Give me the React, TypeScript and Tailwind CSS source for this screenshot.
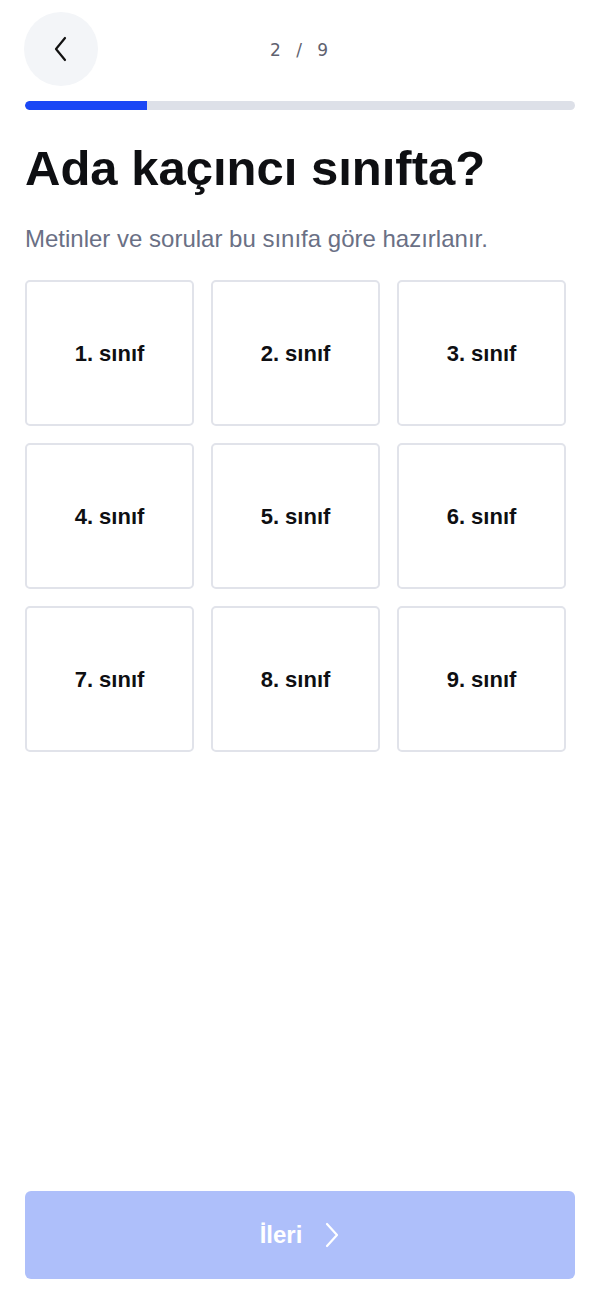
import React from "react";

const grades = Array.from({ length: 9 }, (_, i) => `${i + 1}. sınıf`);

export default function App() {
  const step = 2;
  const total = 9;

  return (
    <div className="min-h-[1298px] w-[600px] bg-white flex flex-col font-['Liberation_Sans',Arial,sans-serif]">
      {/* HEADER */}
      <div className="relative flex items-center h-[74px] mt-[12px] px-[24px]">
        <button className="w-[74px] h-[74px] rounded-full bg-[#f3f5f8] flex items-center justify-center">
          <svg width="20" height="28" viewBox="0 0 20 28" fill="none">
            <path d="M14 3 L5 14 L14 25" stroke="#111" strokeWidth="2.2" strokeLinecap="round" strokeLinejoin="round" />
          </svg>
        </button>
        <div className="absolute left-0 right-0 top-[28px] text-center pointer-events-none text-[17px] leading-[20px] font-['DejaVu_Sans',sans-serif] text-[#5f6270] tracking-[2px]">
          {step} <span className="mx-[6px]">/</span> {total}
        </div>
      </div>

      {/* PROGRESS */}
      <div className="mx-[25px] mt-[15px] h-[9px] rounded-full bg-[#dde0e8] overflow-hidden">
        <div className="h-full bg-[#1a47f5] rounded-l-full" style={{ width: `${(step / total) * 100}%` }} />
      </div>

      {/* TITLE */}
      <h1 className="mx-[25px] mt-[30px] text-[49px] leading-[56px] font-bold tracking-[0px] text-[#0e0f12]">
        Ada kaçıncı sınıfta?
      </h1>
      <p className="mx-[25px] mt-[29px] text-[24px] leading-[28px] text-[#6a7085]">
        Metinler ve sorular bu sınıfa göre hazırlanır.
      </p>

      {/* GRADES */}
      <div className="ml-[25px] mt-[27px] grid grid-cols-[169px_169px_169px] gap-[17px]">
        {grades.map((g) => (
          <button
            key={g}
            className="h-[146px] rounded-[5px] border-2 border-[#e1e3ea] bg-white flex items-center justify-center text-[22px] font-bold text-[#0e0f12]"
          >
            {g}
          </button>
        ))}
      </div>

      <div className="flex-1" />

      {/* NEXT BUTTON */}
      <button className="mx-[25px] mb-[19px] h-[88px] rounded-[6px] bg-[#aebffa] flex items-center justify-center gap-[22px] text-white text-[24px] font-bold">
        İleri
        <svg width="16" height="26" viewBox="0 0 16 26" fill="none">
          <path d="M3 2 L13 13 L3 24" stroke="#fff" strokeWidth="2.2" strokeLinecap="round" strokeLinejoin="round" />
        </svg>
      </button>
    </div>
  );
}
